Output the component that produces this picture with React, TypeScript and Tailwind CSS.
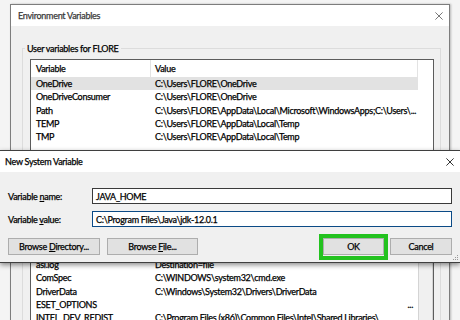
import React from "react";

type Row = { name: string; value: string; right?: boolean };

const userVars: Row[] = [
  { name: "OneDrive", value: "C:\\Users\\FLORE\\OneDrive" },
  { name: "OneDriveConsumer", value: "C:\\Users\\FLORE\\OneDrive" },
  { name: "Path", value: "C:\\Users\\FLORE\\AppData\\Local\\Microsoft\\WindowsApps;C:\\Users\\..." },
  { name: "TEMP", value: "C:\\Users\\FLORE\\AppData\\Local\\Temp" },
  { name: "TMP", value: "C:\\Users\\FLORE\\AppData\\Local\\Temp" },
];

const systemVars: Row[] = [
  { name: "asl.log", value: "Destination=file" },
  { name: "ComSpec", value: "C:\\WINDOWS\\system32\\cmd.exe" },
  { name: "DriverData", value: "C:\\Windows\\System32\\Drivers\\DriverData" },
  { name: "ESET_OPTIONS", value: "...", right: true },
  { name: "INTEL_DEV_REDIST", value: "C:\\Program Files (x86)\\Common Files\\Intel\\Shared Libraries\\" },
  { name: "NUMBER_OF_PROCESSORS", value: "8" },
];

function CloseIcon({ className }: { className?: string }) {
  return (
    <svg viewBox="0 0 10 10" className={className} fill="none" stroke="currentColor" strokeWidth="1">
      <path d="M0.5 0.5L9.5 9.5M9.5 0.5L0.5 9.5" />
    </svg>
  );
}

function VarList({ rows, selected, scrollbar, height }: { rows: Row[]; selected?: number; scrollbar?: boolean; height: string }) {
  return (
    <div className={`flex border border-[#5c5c5c] bg-white ${height}`}>
      <div className="flex w-[387px] flex-col">
        <div className="flex h-[17px] shrink-0 items-center border-r border-[#e3e3e3]">
          <div className="flex h-full w-[120px] items-center border-r border-[#e3e3e3] pl-[5px]">Variable</div>
          <div className="pl-[4px]">Value</div>
        </div>
        {rows.map((r, i) => (
          <div key={r.name} className={`flex h-[13.3px] shrink-0 items-center ${i === selected ? "bg-[#e2e2e2]" : ""}`}>
            <div className="w-[120px] truncate pl-[5px]">{r.name}</div>
            <div className={`flex-1 overflow-hidden whitespace-nowrap pl-[4px] ${r.right ? "pr-[5px] text-right" : ""}`}>{r.value}</div>
          </div>
        ))}
      </div>
      <div className={`w-[15px] ${scrollbar ? "border-x border-[#d4d4d4] bg-[#f0f0f0]" : "bg-white"}`} />
    </div>
  );
}

function Button({ children, className }: { children: React.ReactNode; className?: string }) {
  return (
    <div className={`flex h-[17px] items-center justify-center border border-[#adadad] bg-[#e1e1e1] ${className ?? ""}`}>
      {children}
    </div>
  );
}

export default function App() {
  return (
    <div className="relative h-[320px] w-[460px] overflow-hidden bg-[#f4f4f4] pl-[10px] pt-[4px] font-['Lato','Noto_Sans',sans-serif] text-[9px] leading-[13px] tracking-[-0.28px] text-black [-webkit-text-stroke:0.25px_currentColor]">
      {/* Environment Variables window (background) */}
      <div className="h-[400px] w-[440px] border-x border-t border-[#7d7d7d] bg-[#f0f0f0] shadow-[1px_0_2px_rgba(0,0,0,0.25)]">
        <div className="flex h-[21px] items-center justify-between bg-white pl-[7px] pr-[6px] text-[#3a3a3a]">
          <span>Environment Variables</span>
          <CloseIcon className="h-[8px] w-[8px] text-[#555]" />
        </div>

        <fieldset className="ml-[11px] mr-[8px] mt-[16px] border border-[#dcdcdc] pb-[7px]">
          <legend className="ml-[2px] px-[2px] leading-[13px]">User variables for FLORE</legend>
          <div className="ml-[7px] mr-[6px] mt-[4px]">
            <VarList rows={userVars} selected={0} height="h-[104px]" />
          </div>
        </fieldset>

        <div className="ml-[170px] mt-[7px] flex gap-[6px]">
          <Button className="w-[70px]">New...</Button>
          <Button className="w-[70px]">Edit...</Button>
          <Button className="w-[70px]">Delete</Button>
        </div>

        <fieldset className="ml-[11px] mr-[8px] mt-[8px] border border-[#dcdcdc] pb-[7px]">
          <legend className="ml-[2px] px-[2px] leading-[13px]">System variables</legend>
          <div className="ml-[7px] mr-[6px] mt-[24px]">
            <VarList rows={systemVars} scrollbar height="h-[120px]" />
          </div>
        </fieldset>
      </div>

      {/* New System Variable dialog */}
      <div className="absolute left-0 right-0 top-[150px] border-y border-[#3f3f3f] bg-[#f0f0f0] shadow-[0_2px_5px_rgba(0,0,0,0.45)]">
        <div className="flex h-[21px] items-center justify-between bg-white pl-[5px] pr-[6px]">
          <span>New System Variable</span>
          <CloseIcon className="h-[8px] w-[8px] text-black" />
        </div>
        <div className="relative h-[90px] px-[8px] pt-[16px]">
          <div className="flex h-[16px] items-center">
            <div className="w-[84px]">
              Variable <u>n</u>ame:
            </div>
            <div className="flex h-full flex-1 items-center border border-[#3a3a3a] bg-white pl-[3px]">JAVA_HOME</div>
          </div>
          <div className="mt-[7px] flex h-[16px] items-center">
            <div className="w-[84px]">
              Variable <u>v</u>alue:
            </div>
            <div className="flex h-full flex-1 items-center border border-[#0b4a86] bg-white pl-[3px]">
              C:\Program Files\Java\jdk-12.0.1
            </div>
          </div>
          <div className="mt-[11px] flex items-center">
            <Button className="w-[92px]">
              <span>
                Browse <u>D</u>irectory...
              </span>
            </Button>
            <Button className="ml-[7px] w-[91px]">
              <span>
                Browse <u>F</u>ile...
              </span>
            </Button>
            <div className="relative ml-auto">
              <Button className="w-[61px] border-[#1d3a57]">OK</Button>
              <div className="absolute -inset-[4px] -bottom-[5px] border-[4px] border-[#23c21f]" />
            </div>
            <Button className="ml-[6px] w-[62px]">Cancel</Button>
          </div>
          <div className="absolute bottom-[2px] right-[2px] grid grid-cols-3 gap-[1px]">
            <span className="h-[1px] w-[1px]" />
            <span className="h-[1px] w-[1px]" />
            <span className="h-[1px] w-[1px] bg-[#9a9a9a]" />
            <span className="h-[1px] w-[1px]" />
            <span className="h-[1px] w-[1px] bg-[#9a9a9a]" />
            <span className="h-[1px] w-[1px] bg-[#9a9a9a]" />
            <span className="h-[1px] w-[1px] bg-[#9a9a9a]" />
            <span className="h-[1px] w-[1px] bg-[#9a9a9a]" />
            <span className="h-[1px] w-[1px] bg-[#9a9a9a]" />
          </div>
        </div>
      </div>
    </div>
  );
}
